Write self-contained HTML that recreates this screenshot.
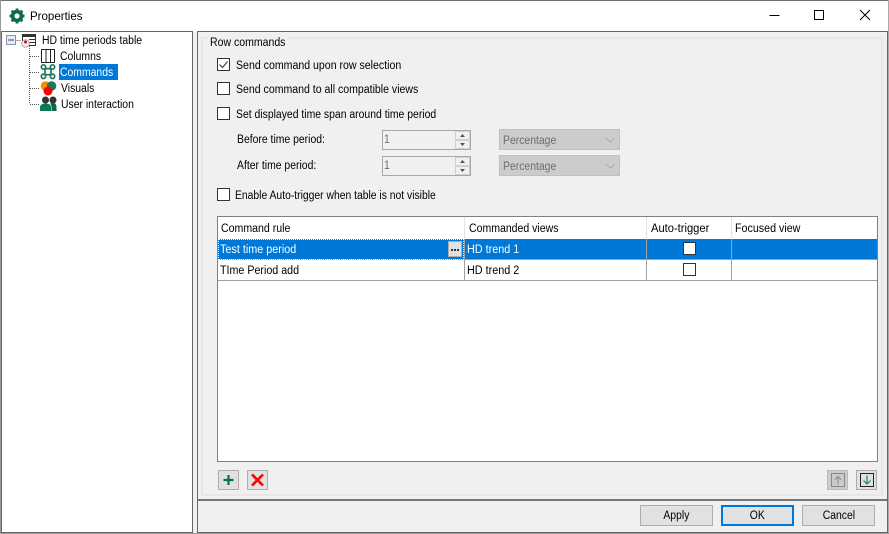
<!DOCTYPE html>
<html><head><meta charset="utf-8">
<style>
html,body{margin:0;padding:0;width:889px;height:534px;overflow:hidden;background:#f0f0f0;font-family:"Liberation Sans",sans-serif;font-size:11.5px;color:#000}
.a{position:absolute;box-sizing:border-box}
.t{position:absolute;white-space:nowrap;line-height:16px;height:16px;transform:scaleX(.905);transform-origin:0 50%;margin-top:1px}
.c{transform:scaleX(.94)}
.cb{position:absolute;width:13px;height:13px;background:#fff;border:1px solid #333;box-sizing:border-box}
.btn{position:absolute;box-sizing:border-box;background:#e1e1e1;border:1px solid #adadad;text-align:center;font-size:11.5px;line-height:20px;height:21px;width:73px;top:505px}
.btn span{display:inline-block;transform:scaleX(.905)}
.ln{position:absolute;background:#a0a0a0}
</style></head><body>
<div class="a" style="left:0;top:0;width:889px;height:534px;background:#f0f0f0"></div>
<div class="a" style="left:0;top:0;width:888px;height:32px;background:#fff"></div>
<div class="a" style="left:0;top:0;width:889px;height:1px;background:#707070"></div>
<div class="a" style="left:0;top:0;width:1px;height:534px;background:#999"></div>
<div class="a" style="left:888px;top:0;width:1px;height:534px;background:#aaa"></div>
<div class="a" style="left:0;top:533px;width:889px;height:1px;background:#999"></div>

<svg class="a" style="left:9px;top:8px" width="16" height="16" viewBox="0 0 16 16"><circle cx="8" cy="8" r="4.4" fill="none" stroke="#0b6b4b" stroke-width="3.6"/><g stroke="#0b6b4b" stroke-width="2.8"><path d="M8 .5v3M8 12.500v3M.5 8h3M12.500 8h3M2.700 2.700l2 2M11.300 11.300l2 2M13.300 2.700l-2 2M4.700 11.300l-2 2"/></g></svg>
<div class="t" style="left:30px;top:7px;font-size:12px;transform:scaleX(.96)">Properties</div>

<svg class="a" style="left:740px;top:0" width="149" height="32"><path d="M29.500 15.500h10" stroke="#000" fill="none"/><rect x="74.500" y="10.500" width="9" height="9" fill="none" stroke="#000"/><path d="M120 10l10 10M130 10l-10 10" stroke="#000" fill="none"/></svg>

<!-- tree panel -->
<div class="a" style="left:1px;top:31px;width:192px;height:502px;background:#fff;border:1px solid #666"></div>
<svg class="a" style="left:0;top:30px" width="70" height="85">
<g fill="none" stroke="#555" stroke-dasharray="1 1"><path d="M15.500 10.500h6M29.500 16v57M30 26.500h10M30 42.500h10M30 58.500h10M30 74.500h10"/></g>
<rect x="6.500" y="5.500" width="9" height="9" fill="#e8ecf4" stroke="#8a96a8"/><path d="M8 10h6" stroke="#2a4a90"/>
<rect x="22.500" y="4.500" width="13" height="11" fill="#fff" stroke="#333"/><rect x="22" y="4" width="14" height="3" fill="#333"/><path d="M29 9.500h6M29 12.500h6" stroke="#333"/>
<circle cx="25.500" cy="13.500" r="3.800" fill="#eee" stroke="#aaa"/><circle cx="25.500" cy="12" r="1.500" fill="#e00"/>
<rect x="41.500" y="19.500" width="13" height="13" fill="none" stroke="#222"/><path d="M46 20v12M50.500 20v12" stroke="#222" fill="none"/>
<g fill="none" stroke="#1f7a5c" stroke-width="1.700"><rect x="45" y="38.700" width="6" height="6"/><circle cx="43.500" cy="37" r="2.200"/><circle cx="52.500" cy="37" r="2.200"/><circle cx="43.500" cy="46.300" r="2.200"/><circle cx="52.500" cy="46.300" r="2.200"/></g>
<circle cx="45.500" cy="56" r="4.800" fill="#f09000"/><circle cx="51.500" cy="56" r="4.800" fill="#1f7a5c"/><circle cx="48" cy="61" r="4.500" fill="#f00"/>
<circle cx="45.500" cy="70" r="3.500" fill="#333"/><circle cx="53" cy="70" r="3.500" fill="#333"/><path d="M40 81v-3.500q0-4 5.500-4t5.500 4v3.500z" fill="#0a7a50"/><path d="M51.500 81v-3.500q0-2.500-1.500-4 1.500-.6 3-.6 3.500 0 3.500 4v4.100z" fill="#0a6a45"/>
</svg>
<div class="t" style="left:42px;top:32px">HD time periods table</div>
<div class="t" style="left:60px;top:48px">Columns</div>
<div class="a" style="left:59px;top:64px;width:59px;height:16px;background:#0078d7"></div>
<div class="t" style="left:60px;top:64px;color:#fff">Commands</div>
<div class="t" style="left:61px;top:80px">Visuals</div>
<div class="t" style="left:61px;top:96px">User interaction</div>

<!-- right panel -->
<div class="a" style="left:197px;top:31px;width:691px;height:470px;border:1px solid #666;border-right:0;border-bottom:2px solid #777"></div>
<div class="a" style="left:197px;top:500px;width:1px;height:33px;background:#666"></div>
<div class="a" style="left:197px;top:532px;width:691px;height:1px;background:#666"></div>
<div class="a" style="left:887px;top:31px;width:1px;height:502px;background:#666"></div>
<div class="a" style="left:201px;top:37px;width:682px;height:459px;border:2px solid #e6e6e6;"></div>
<div class="a" style="left:208px;top:34px;width:80px;height:16px;background:#f0f0f0"></div>
<div class="t" style="left:210px;top:34px;transform:scaleX(.915)">Row commands</div>

<div class="cb" style="left:217px;top:58px"></div>
<svg class="a" style="left:217px;top:58px" width="13" height="13"><path d="M2.500 6.500l3 3 5-6" fill="none" stroke="#444" stroke-width="1.200"/></svg>
<div class="t" style="left:236px;top:57px;transform:scaleX(.92)">Send command upon row selection</div>
<div class="cb" style="left:217px;top:82px"></div>
<div class="t" style="left:236px;top:81px;transform:scaleX(.917)">Send command to all compatible views</div>
<div class="cb" style="left:217px;top:107px"></div>
<div class="t" style="left:236px;top:106px">Set displayed time span around time period</div>
<div class="t" style="left:237px;top:131px">Before time period:</div>
<div class="t" style="left:237px;top:157px">After time period:</div>
<div class="cb" style="left:217px;top:188px"></div>
<div class="t" style="left:235px;top:187px;transform:scaleX(.9)">Enable Auto-trigger when table is not visible</div>

<div class="a" style="left:382px;top:130px;width:89px;height:20px;background:#f0f0f0;border:1px solid #a8a8a8"></div>
<div class="t" style="left:384px;top:131px;color:#6d6d6d">1</div>
<div class="a" style="left:382px;top:156px;width:89px;height:20px;background:#f0f0f0;border:1px solid #a8a8a8"></div>
<div class="t" style="left:384px;top:157px;color:#6d6d6d">1</div>
<svg class="a" style="left:455px;top:130px" width="16" height="46"><g fill="#f0f0f0" stroke="#d0d0d0"><rect x=".5" y="1.500" width="14" height="8"/><rect x=".5" y="10.500" width="14" height="8"/><rect x=".5" y="27.500" width="14" height="8"/><rect x=".5" y="36.500" width="14" height="8"/></g><g fill="#555"><path d="M5 7l2.500-3L10 7zM5 13l2.500 3L10 13zM5 33l2.500-3L10 33zM5 39l2.500 3L10 39z"/></g></svg>

<div class="a" style="left:499px;top:129px;width:121px;height:21px;background:#ccc;border:1px solid #c0c0c0"></div>
<div class="t" style="left:503px;top:132px;color:#6d6d6d">Percentage</div>
<div class="a" style="left:499px;top:155px;width:121px;height:21px;background:#ccc;border:1px solid #c0c0c0"></div>
<div class="t" style="left:503px;top:158px;color:#6d6d6d">Percentage</div>
<svg class="a" style="left:604px;top:135px" width="12" height="36"><path d="M2 3l4.500 4L11 3M2 29l4.500 4 4.500-4" fill="none" stroke="#aaa"/></svg>

<!-- table -->
<div class="a" style="left:217px;top:216px;width:661px;height:246px;background:#fff;border:1px solid #808080"></div>
<div class="a" style="left:218px;top:239px;width:659px;height:20px;background:#0078d7"></div>
<div class="ln" style="left:218px;top:259px;width:659px;height:1px"></div>
<div class="ln" style="left:218px;top:280px;width:659px;height:1px"></div>
<div class="a" style="left:464px;top:217px;width:1px;height:22px;background:#e3e3e3"></div>
<div class="a" style="left:646px;top:217px;width:1px;height:22px;background:#e3e3e3"></div>
<div class="a" style="left:731px;top:217px;width:1px;height:22px;background:#e3e3e3"></div>
<div class="ln" style="left:464px;top:239px;width:1px;height:42px"></div>
<div class="ln" style="left:646px;top:239px;width:1px;height:42px"></div>
<div class="ln" style="left:731px;top:239px;width:1px;height:42px"></div>
<div class="a" style="left:218px;top:239px;width:246px;height:21px;border:1px dotted #fff"></div>
<div class="t" style="left:221px;top:220px;transform:scaleX(.92)">Command rule</div>
<div class="t" style="left:469px;top:220px;transform:scaleX(.915)">Commanded views</div>
<div class="t" style="left:651px;top:220px;transform:scaleX(.97)">Auto-trigger</div>
<div class="t" style="left:735px;top:220px;transform:scaleX(.93)">Focused view</div>
<div class="t c" style="left:220px;top:241px;color:#fff">Test time period</div>
<div class="t c" style="left:467px;top:241px;color:#fff">HD trend 1</div>
<div class="t c" style="left:220px;top:262px;transform:scaleX(.93)">TIme Period add</div>
<div class="t c" style="left:467px;top:262px">HD trend 2</div>
<div class="a" style="left:448px;top:241px;width:14px;height:16px;background:#e1e1e1;border:1px solid #adadad"></div>
<div class="a" style="left:451px;top:249px;width:2px;height:2px;background:#333;box-shadow:3px 0 #333,6px 0 #333"></div>
<div class="cb" style="left:683px;top:242px"></div>
<div class="cb" style="left:683px;top:263px"></div>

<!-- small buttons -->
<div class="a" style="left:218px;top:470px;width:21px;height:20px;background:#e1e1e1;border:1px solid #adadad"></div>
<svg class="a" style="left:218px;top:470px" width="21" height="20"><path d="M10.500 5v10M5.500 10h10" stroke="#0a6e4a" stroke-width="2.200"/></svg>
<div class="a" style="left:247px;top:470px;width:21px;height:20px;background:#e1e1e1;border:1px solid #adadad"></div>
<svg class="a" style="left:247px;top:470px" width="21" height="20"><path d="M5 4.500l11 11M16 4.500l-11 11" stroke="#f00" stroke-width="2.600"/></svg>
<div class="a" style="left:827px;top:470px;width:21px;height:20px;background:#ccc;border:1px solid #bcbcbc"></div>
<svg class="a" style="left:827px;top:470px" width="21" height="20"><rect x="4.500" y="3.500" width="13" height="13" fill="none" stroke="#888"/><path d="M11 14.500v-8M8 9.500l3-3 3 3" fill="none" stroke="#888"/></svg>
<div class="a" style="left:856px;top:470px;width:21px;height:20px;background:#e1e1e1;border:1px solid #adadad"></div>
<svg class="a" style="left:856px;top:470px" width="21" height="20"><rect x="4.500" y="3.500" width="13" height="13" fill="none" stroke="#222"/><path d="M11 5.500v8.500M7.500 10.500l3.500 3.500 3.500-3.500" fill="none" stroke="#1f8a64" stroke-width="1.200"/></svg>

<!-- bottom buttons -->
<div class="btn" style="left:640px"><span>Apply</span></div>
<div class="btn" style="left:721px;border:2px solid #0078d7;line-height:18px"><span>OK</span></div>
<div class="btn" style="left:802px"><span>Cancel</span></div>
</body></html>
